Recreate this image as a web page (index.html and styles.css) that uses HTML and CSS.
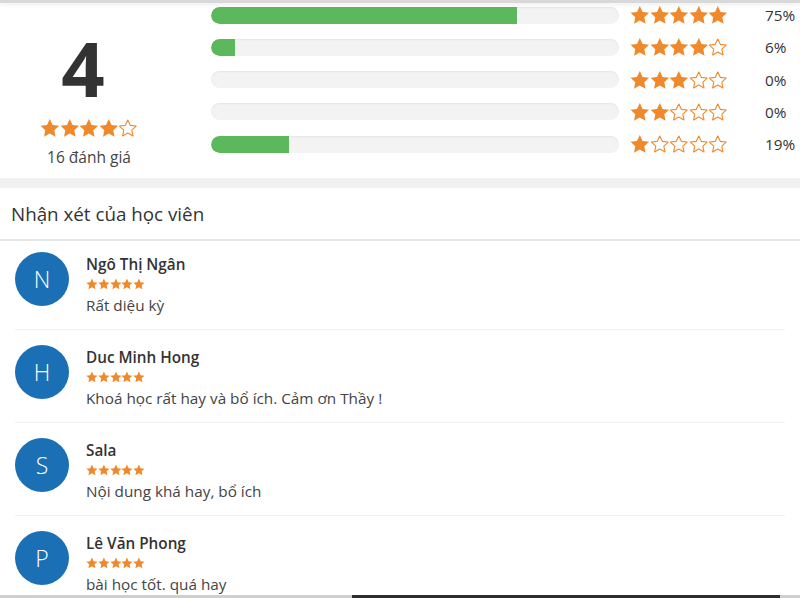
FILE: index.html
```html
<!DOCTYPE html>
<html lang="vi">
<head>
<meta charset="utf-8">
<title>Đánh giá</title>
<link rel="stylesheet" href="styles.css">
</head>
<body>
<svg class="defs" width="0" height="0" aria-hidden="true">
  <defs>
    <symbol id="sf" viewBox="0 0 24 24"><polygon points="12,1 15.41,8.31 23.41,9.29 17.52,14.79 19.05,22.71 12,18.8 4.95,22.71 6.48,14.79 0.59,9.29 8.59,8.31" fill="#f0892b"/></symbol>
    <symbol id="so" viewBox="0 0 24 24"><polygon points="12,1 15.41,8.31 23.41,9.29 17.52,14.79 19.05,22.71 12,18.8 4.95,22.71 6.48,14.79 0.59,9.29 8.59,8.31" transform="translate(12 12.6) scale(0.9) translate(-12 -12.6)" fill="none" stroke="#f0892b" stroke-width="1.5" stroke-linejoin="round"/></symbol>
  </defs>
</svg>

<div class="topshade"></div>

<section class="summary">
  <div class="score">
    <div class="big">4</div>
    <div class="stars md">
      <svg><use href="#sf"/></svg><svg><use href="#sf"/></svg><svg><use href="#sf"/></svg><svg><use href="#sf"/></svg><svg><use href="#so"/></svg>
    </div>
    <div class="count">16 đánh giá</div>
  </div>
  <div class="bars">
    <div class="row">
      <div class="track"><div class="fill" style="width:75%"></div></div>
      <div class="stars md"><svg><use href="#sf"/></svg><svg><use href="#sf"/></svg><svg><use href="#sf"/></svg><svg><use href="#sf"/></svg><svg><use href="#sf"/></svg></div>
      <div class="pct">75%</div>
    </div>
    <div class="row">
      <div class="track"><div class="fill" style="width:6%"></div></div>
      <div class="stars md"><svg><use href="#sf"/></svg><svg><use href="#sf"/></svg><svg><use href="#sf"/></svg><svg><use href="#sf"/></svg><svg><use href="#so"/></svg></div>
      <div class="pct">6%</div>
    </div>
    <div class="row">
      <div class="track"></div>
      <div class="stars md"><svg><use href="#sf"/></svg><svg><use href="#sf"/></svg><svg><use href="#sf"/></svg><svg><use href="#so"/></svg><svg><use href="#so"/></svg></div>
      <div class="pct">0%</div>
    </div>
    <div class="row">
      <div class="track"></div>
      <div class="stars md"><svg><use href="#sf"/></svg><svg><use href="#sf"/></svg><svg><use href="#so"/></svg><svg><use href="#so"/></svg><svg><use href="#so"/></svg></div>
      <div class="pct">0%</div>
    </div>
    <div class="row">
      <div class="track"><div class="fill" style="width:19%"></div></div>
      <div class="stars md"><svg><use href="#sf"/></svg><svg><use href="#so"/></svg><svg><use href="#so"/></svg><svg><use href="#so"/></svg><svg><use href="#so"/></svg></div>
      <div class="pct">19%</div>
    </div>
  </div>
</section>

<section class="reviews">
  <h2 class="title">Nhận xét của học viên</h2>
  <ul class="list">
    <li class="item">
      <div class="avatar">N</div>
      <div class="body">
        <div class="name">Ngô Thị Ngân</div>
        <div class="stars sm"><svg><use href="#sf"/></svg><svg><use href="#sf"/></svg><svg><use href="#sf"/></svg><svg><use href="#sf"/></svg><svg><use href="#sf"/></svg></div>
        <div class="text">Rất diệu kỳ</div>
      </div>
    </li>
    <li class="item">
      <div class="avatar">H</div>
      <div class="body">
        <div class="name">Duc Minh Hong</div>
        <div class="stars sm"><svg><use href="#sf"/></svg><svg><use href="#sf"/></svg><svg><use href="#sf"/></svg><svg><use href="#sf"/></svg><svg><use href="#sf"/></svg></div>
        <div class="text">Khoá học rất hay và bổ ích. Cảm ơn Thầy !</div>
      </div>
    </li>
    <li class="item">
      <div class="avatar">S</div>
      <div class="body">
        <div class="name">Sala</div>
        <div class="stars sm"><svg><use href="#sf"/></svg><svg><use href="#sf"/></svg><svg><use href="#sf"/></svg><svg><use href="#sf"/></svg><svg><use href="#sf"/></svg></div>
        <div class="text">Nội dung khá hay, bổ ích</div>
      </div>
    </li>
    <li class="item">
      <div class="avatar">P</div>
      <div class="body">
        <div class="name">Lê Văn Phong</div>
        <div class="stars sm"><svg><use href="#sf"/></svg><svg><use href="#sf"/></svg><svg><use href="#sf"/></svg><svg><use href="#sf"/></svg><svg><use href="#sf"/></svg></div>
        <div class="text">bài học tốt. quá hay</div>
      </div>
    </li>
  </ul>
</section>

<div class="bottombar"><div class="thumb"></div></div>
</body>
</html>
```

FILE: styles.css
```css
* { box-sizing: border-box; }

html, body {
  margin: 0;
  height: 598px;
  overflow: hidden;
}

body {
  background: #f1f1f1;
  font-family: "Open Sans", "Noto Sans", sans-serif;
  color: #333;
}

.defs { position: absolute; width: 0; height: 0; }

.topshade {
  position: fixed;
  top: 0;
  left: 0;
  right: 0;
  height: 3px;
  background: #d9d9d9;
  box-shadow: 0 1px 5px rgba(0, 0, 0, 0.1);
  z-index: 2;
}

/* ---------- summary ---------- */
.summary {
  background: #fff;
  height: 178px;
  display: flex;
}

.score {
  width: 178px;
  display: flex;
  flex-direction: column;
  align-items: center;
  padding-top: 29px;
}

.big {
  font-size: 76px;
  font-weight: 700;
  line-height: 78px;
  color: #333;
  margin-right: 12px;
}

.score .stars { margin-top: 11px; }

.count {
  font-size: 15.5px;
  line-height: 22px;
  color: #444;
  margin-top: 8px;
}

.bars {
  margin-left: 33px;
  margin-top: -1px;
  display: flex;
  flex-direction: column;
}

.row {
  height: 32.25px;
  display: flex;
  align-items: center;
}

.track {
  width: 408px;
  height: 17px;
  border-radius: 9px;
  background: #f3f3f3;
  box-shadow: inset 0 1px 2px rgba(0, 0, 0, 0.06);
  overflow: hidden;
}

.fill {
  height: 100%;
  background: #5cb85c;
  border-radius: 9px 0 0 9px;
}

.row .stars { margin-left: 11px; }

.pct {
  margin-left: 37px;
  font-size: 15.3px;
  color: #333;
}

.stars { display: flex; }
.stars svg { display: block; overflow: visible; }
.stars.md svg { width: 19.6px; height: 20px; }
.stars.sm svg { width: 11.8px; height: 12px; }

/* ---------- reviews ---------- */
.reviews {
  background: #fff;
  margin-top: 10px;
}

.title {
  margin: 0;
  height: 53px;
  padding: 14px 0 0 11px;
  font-size: 18.8px;
  font-weight: 400;
  line-height: 25px;
  color: #333;
  border-bottom: 2px solid #e7e7e7;
}

.list {
  list-style: none;
  margin: 0;
  padding: 0 15px;
}

.item {
  display: flex;
  align-items: flex-start;
  padding: 16px 0 13px;
  border-bottom: 1px solid #f1f1f1;
}

.item:first-child { padding-top: 12px; }

.avatar {
  width: 54px;
  height: 54px;
  margin-top: -1px;
  border-radius: 50%;
  background: #1b6fb4;
  color: #fff;
  font-size: 23px;
  font-weight: 300;
  display: flex;
  align-items: center;
  justify-content: center;
  flex-shrink: 0;
}

.body { margin-left: 17px; }

.name {
  font-size: 15.3px;
  font-weight: 600;
  line-height: 22px;
  color: #333;
}

.body .stars { margin-top: 3px; }

.text {
  margin-top: 4px;
  font-size: 15.3px;
  line-height: 22px;
  color: #444;
}

.bottombar {
  position: fixed;
  left: 0;
  right: 0;
  bottom: 0;
  height: 3px;
  background: #cfcfcf;
  z-index: 2;
}

.thumb {
  margin-left: 352px;
  width: 428px;
  height: 3px;
  background: #2e2e2e;
}
```
